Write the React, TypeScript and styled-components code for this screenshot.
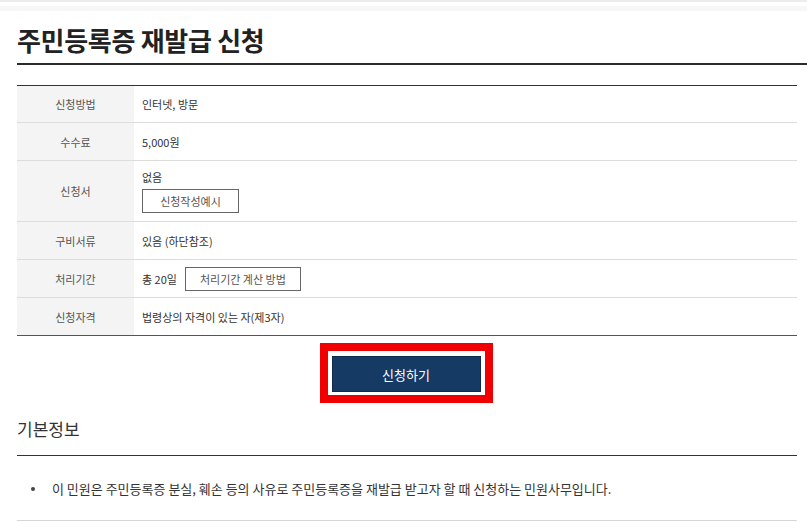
import React from 'react';
import styled, { createGlobalStyle } from 'styled-components';

const GlobalStyle = createGlobalStyle`
  html, body {
    margin: 0;
    padding: 0;
    background: #fff;
    font-family: "Noto Sans CJK KR", "Noto Sans", sans-serif;
    color: #333;
    overflow: hidden;
  }
`;

const TopStrip = styled.div`
  height: 2px;
  background: #ececec;
  border-bottom: 4px solid #fff;
  box-shadow: 0 5px 0 #f7f7f7;
`;

const Page = styled.div`
  padding: 0 10px 0 17px;
`;

const Title = styled.h1`
  margin: 16px -10px 0 0;
  padding: 0 0 6px 0;
  font-size: 26px;
  line-height: 35px;
  font-weight: 700;
  color: #222;
  letter-spacing: -0.3px;
  border-bottom: 2px solid #2b2b2b;
`;

const InfoTable = styled.div`
  margin-top: 20px;
  border-top: 1px solid #333;
  border-bottom: 1px solid #555;
`;

const Row = styled.div<{ $tall?: boolean }>`
  display: grid;
  grid-template-columns: 117px 1fr;
  min-height: ${p => (p.$tall ? '60px' : '37px')};
  border-top: 1px solid #dcdcdc;

  &:first-child {
    border-top: none;
    min-height: 36px;
  }
`;

const Label = styled.div`
  background: #f4f4f4;
  display: flex;
  align-items: center;
  justify-content: center;
  font-size: 11px;
  color: #555;
`;

const Value = styled.div<{ $column?: boolean }>`
  display: flex;
  flex-direction: ${p => (p.$column ? 'column' : 'row')};
  align-items: ${p => (p.$column ? 'flex-start' : 'center')};
  justify-content: ${p => (p.$column ? 'center' : 'flex-start')};
  gap: ${p => (p.$column ? '4px' : '8px')};
  padding: 0 8px;
  font-size: 11px;
  color: #333;
`;

const OutlineButton = styled.button`
  min-width: 97px;
  height: 24px;
  padding: 0 14px;
  border: 1px solid #666;
  background: #fff;
  font-family: inherit;
  font-size: 11px;
  color: #555;
  cursor: pointer;
`;

const ButtonArea = styled.div`
  display: flex;
  justify-content: center;
  margin-top: 7px;
  padding-right: 2px;
`;

const Highlight = styled.div`
  border: 8px solid #f00000;
  padding: 5px 4px 3px 4px;
  background: #fff;
`;

const ApplyButton = styled.button`
  display: block;
  width: 149px;
  height: 36px;
  border: 1px solid #0e2b4e;
  background: #153a63;
  color: #fff;
  font-family: inherit;
  font-size: 13px;
  cursor: pointer;
`;

const SectionTitle = styled.h2`
  margin: 13px 0 0 0;
  padding-bottom: 13px;
  font-size: 17px;
  line-height: 26px;
  font-weight: 400;
  color: #333;
  border-bottom: 1px solid #333;
`;

const BulletList = styled.ul`
  margin: 0;
  padding: 23px 0 21px 35px;
  border-bottom: 1px solid #d6d6d6;
  list-style: none;
`;

const Bullet = styled.li`
  position: relative;
  font-size: 13px;
  line-height: 20px;
  color: #333;

  &::before {
    content: '';
    position: absolute;
    left: -21px;
    top: 8px;
    width: 4px;
    height: 4px;
    border-radius: 50%;
    background: #444;
  }
`;

const rows = [
  { label: '신청방법', value: '인터넷, 방문' },
  { label: '수수료', value: '5,000원' },
];

export default function App() {
  return (
    <>
      <GlobalStyle />
      <TopStrip />
      <Page>
        <Title>주민등록증 재발급 신청</Title>
        <InfoTable>
          {rows.map(r => (
            <Row key={r.label}>
              <Label>{r.label}</Label>
              <Value>{r.value}</Value>
            </Row>
          ))}
          <Row $tall>
            <Label>신청서</Label>
            <Value $column>
              <span>없음</span>
              <OutlineButton>신청작성예시</OutlineButton>
            </Value>
          </Row>
          <Row>
            <Label>구비서류</Label>
            <Value>있음 (하단참조)</Value>
          </Row>
          <Row>
            <Label>처리기간</Label>
            <Value>
              <span>총 20일</span>
              <OutlineButton>처리기간 계산 방법</OutlineButton>
            </Value>
          </Row>
          <Row>
            <Label>신청자격</Label>
            <Value>법령상의 자격이 있는 자(제3자)</Value>
          </Row>
        </InfoTable>
        <ButtonArea>
          <Highlight>
            <ApplyButton>신청하기</ApplyButton>
          </Highlight>
        </ButtonArea>
        <SectionTitle>기본정보</SectionTitle>
        <BulletList>
          <Bullet>이 민원은 주민등록증 분실, 훼손 등의 사유로 주민등록증을 재발급 받고자 할 때 신청하는 민원사무입니다.</Bullet>
        </BulletList>
      </Page>
    </>
  );
}
